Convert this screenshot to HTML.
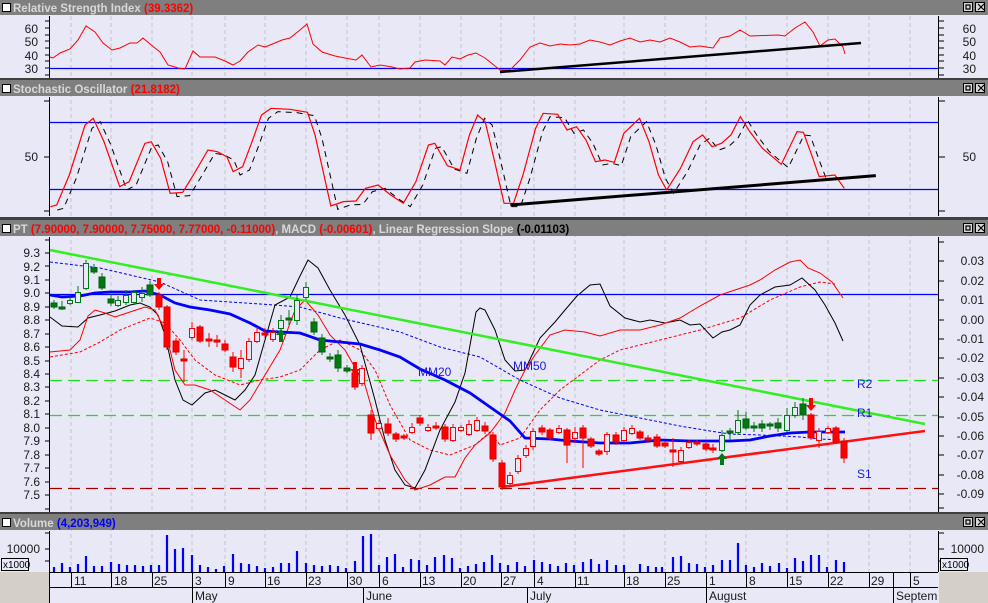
<!DOCTYPE html>
<html><head><meta charset="utf-8"><style>
body{margin:0;background:#e8e8f6;}
svg{display:block;}
text{font-family:"Liberation Sans",sans-serif;}
.ax{font-size:12px;fill:#1a1a1a;}
.tt{font-size:11.5px;font-weight:bold;fill:#d8d8d8;}
.gf{fill:#007a10;stroke:#006010;}
.gh{fill:#e8e8f6;stroke:#007a10;}
.rf{fill:#ff0000;stroke:#e00000;}
.rh{fill:#e8e8f6;stroke:#ff0000;}
</style></head><body>
<svg width="988" height="603" viewBox="0 0 988 603" xmlns="http://www.w3.org/2000/svg">
<rect width="988" height="603" fill="#e8e8f6"/>
<g stroke="#c4c4cc" stroke-dasharray="4,3" stroke-width="1">
<path d="M71 16V572M111 16V572M152 16V572M192 16V572M225 16V572M265 16V572M306 16V572M347 16V572M379 16V572M420 16V572M461 16V572M501 16V572M534 16V572M575 16V572M624 16V572M665 16V572M706 16V572M746 16V572M787 16V572M828 16V572M869 16V572M910 16V572"/>
</g>

<g>
<rect x="0" y="0" width="988" height="15" fill="#7f7f7f"/>
<rect x="0" y="80" width="988" height="16" fill="#7f7f7f"/>
<rect x="0" y="220" width="988" height="16" fill="#7f7f7f"/>
<rect x="0" y="514" width="988" height="16" fill="#7f7f7f"/>
<g fill="#404040"><rect x="0" y="78" width="988" height="2"/><rect x="0" y="217" width="988" height="3"/><rect x="0" y="512" width="988" height="2"/></g>
<g fill="#fff" stroke="#000" stroke-width="1">
<rect x="2.5" y="3.5" width="8" height="8"/><rect x="2.5" y="84.5" width="8" height="8"/><rect x="2.5" y="224.5" width="8" height="8"/><rect x="2.5" y="518.5" width="8" height="8"/>
</g>
<g fill="#d8d8d8" stroke="#000" stroke-width="1">
<rect x="963.5" y="2.5" width="9" height="9"/><rect x="975.5" y="2.5" width="9" height="9"/>
<rect x="963.5" y="83.5" width="9" height="9"/><rect x="975.5" y="83.5" width="9" height="9"/>
<rect x="963.5" y="223.5" width="9" height="9"/><rect x="975.5" y="223.5" width="9" height="9"/>
<rect x="963.5" y="517.5" width="9" height="9"/><rect x="975.5" y="517.5" width="9" height="9"/>
</g>
<g stroke="#000" stroke-width="1.2"><path d="M966 5h4v4h-4zM978 4l6 6M984 4l-6 6M966 86h4v4h-4zM978 85l6 6M984 85l-6 6M966 226h4v4h-4zM978 225l6 6M984 225l-6 6M966 520h4v4h-4zM978 519l6 6M984 519l-6 6" fill="none"/></g>
<text class="tt" x="13" y="12">Relative Strength Index <tspan fill="#ff0000">(39.3362)</tspan></text>
<text class="tt" x="13" y="93">Stochastic Oscillator <tspan fill="#ff0000">(21.8182)</tspan></text>
<text class="tt" x="13" y="233">PT <tspan fill="#ff0000">(7.90000, 7.90000, 7.75000, 7.77000, -0.11000)</tspan>, MACD <tspan fill="#ff0000">(-0.00601)</tspan>, Linear Regression Slope <tspan fill="#000">(-0.01103)</tspan></text>
<text class="tt" x="13" y="527">Volume <tspan fill="#0000ff">(4,203,949)</tspan></text>
</g>

<g stroke="#000" stroke-width="1">
<path d="M49.5 16V78M938.5 16V78M49.5 97V216M938.5 97V216M49.5 237V512M938.5 237V512M49.5 531V603M938.5 531V572"/>
<path d="M45 21h5M45 28h5M45 35h5M45 41h5M45 48h5M45 55h5M45 61h5M45 68h5M45 75h5M939 21h5M939 28h5M939 35h5M939 41h5M939 48h5M939 55h5M939 61h5M939 68h5M939 75h5"/>
<path d="M44 101h6M44 211h6M44 157h6M939 101h6M939 211h6M939 157h6"/>
<path d="M45 253h5M45 266h5M45 280h5M45 293h5M45 307h5M45 320h5M45 334h5M45 347h5M45 361h5M45 374h5M45 387h5M45 401h5M45 414h5M45 428h5M45 441h5M45 455h5M45 468h5M45 482h5M45 495h5M45 509h5M45 240h5"/>
<path d="M939 242h5M939 261h5M939 281h5M939 300h5M939 320h5M939 339h5M939 358h5M939 378h5M939 397h5M939 417h5M939 436h5M939 455h5M939 475h5M939 494h5M939 508h5"/>
<path d="M45 533h5M45 549h5M45 561h5M939 533h5M939 549h5M939 561h5"/>
</g>
<g class="ax" text-anchor="end">
<text x="38" y="33">60</text><text x="38" y="46">50</text><text x="38" y="60">40</text><text x="38" y="73">30</text>
<text x="38" y="161">50</text>
<text x="40" y="257">9.3</text><text x="40" y="271">9.2</text><text x="40" y="284">9.1</text><text x="40" y="297">9.0</text><text x="40" y="311">8.9</text><text x="40" y="324">8.8</text><text x="40" y="338">8.7</text><text x="40" y="351">8.6</text><text x="40" y="365">8.5</text><text x="40" y="378">8.4</text><text x="40" y="391">8.3</text><text x="40" y="405">8.2</text><text x="40" y="418">8.1</text><text x="40" y="432">8.0</text><text x="40" y="445">7.9</text><text x="40" y="459">7.8</text><text x="40" y="472">7.7</text><text x="40" y="486">7.6</text><text x="40" y="499">7.5</text>
<text x="40" y="553">10000</text>
</g>
<g class="ax" text-anchor="end">
<text x="976" y="33">60</text><text x="976" y="46">50</text><text x="976" y="60">40</text><text x="976" y="73">30</text>
<text x="976" y="161">50</text>
<text x="984" y="265">0.03</text><text x="984" y="285">0.02</text><text x="984" y="304">0.01</text><text x="984" y="324">0.00</text><text x="984" y="343">-0.01</text><text x="984" y="362">-0.02</text><text x="984" y="382">-0.03</text><text x="984" y="401">-0.04</text><text x="984" y="421">-0.05</text><text x="984" y="440">-0.06</text><text x="984" y="459">-0.07</text><text x="984" y="479">-0.08</text><text x="984" y="498">-0.09</text>
<text x="984" y="553">10000</text>
</g>
<g font-size="10" fill="#000"><rect x="1.5" y="558.5" width="27" height="12" fill="#e8e8f6" stroke="#000"/><text x="3" y="568">x1000</text>
<rect x="940.5" y="558.5" width="27" height="12" fill="#e8e8f6" stroke="#000"/><text x="942" y="568">x1000</text></g>

<path d="M50 68.5H938" stroke="#0000ff" stroke-width="1.2"/>
<polyline fill="none" stroke="#ff0000" stroke-width="1" points="50,57 53,58 60,53 70,49 78,40 86,26 95,32 103,43 112,50 120,48 130,43 137,43 143,38 150,44 160,52 168,65 178,68 185,69 193,51 200,57 215,57 225,61 233,65 240,61 248,52 258,45 265,47 275,43 282,40 290,38 300,30 307,24 313,44 322,52 335,56 345,58 356,60 362,55 371,67 380,65 392,67 400,69 410,68 415,62 425,60 440,61 445,65 452,57 460,59 468,55 476,53 485,58 495,66 500,70 510,70 520,60 530,47 540,43 550,46 560,44 570,45 580,44 590,40 600,42 610,45 620,41 630,38 640,42 650,40 660,42 670,38 680,42 690,47 700,46 713,48 720,38 730,36 740,30 750,36 778,35 785,36 795,28 805,22 813,32 820,46 828,40 835,39 843,47 845,54"/>
<path d="M500 72L861 43" stroke="#000" stroke-width="2.5"/>

<path d="M50 122.5H938M50 189.5H938" stroke="#0000ff" stroke-width="1.2"/>
<g transform="translate(0,75) scale(0.6301,0.3333)">
<polyline fill="none" stroke="#000" stroke-dasharray="6,5" vector-effect="non-scaling-stroke" stroke-width="1" transform="translate(11,10)" points="80,395 90,390 110,300 135,150 148,130 165,200 190,335 205,320 230,205 240,200 255,250 270,355 290,352 310,290 330,225 345,230 360,245 370,290 385,275 400,200 415,120 430,100 460,103 488,112 500,180 525,393 545,380 565,378 580,340 600,330 620,360 640,385 660,320 680,210 690,205 710,272 730,285 745,180 758,120 770,140 785,260 800,385 815,385 830,300 850,160 862,115 885,118 900,165 915,155 930,195 945,260 960,255 975,262 990,175 1015,130 1030,200 1045,300 1058,345 1080,280 1100,200 1115,180 1130,215 1145,205 1160,180 1175,125 1190,170 1210,220 1240,268 1265,170 1275,172 1290,250 1300,300 1325,300"/>
<polyline fill="none" stroke="#ff0000" vector-effect="non-scaling-stroke" stroke-width="1.2" points="80,395 90,390 110,300 135,150 148,130 165,200 190,335 205,320 230,205 240,200 255,250 270,355 290,352 310,290 330,225 345,230 360,245 370,290 385,275 400,200 415,120 430,100 460,103 488,112 500,180 525,393 545,380 565,378 580,340 600,330 620,360 640,385 660,320 680,210 690,205 710,272 730,285 745,180 758,120 770,140 785,260 800,385 815,385 830,300 850,160 862,115 885,118 900,165 915,155 930,195 945,260 960,255 975,262 990,175 1015,130 1030,200 1045,300 1058,345 1080,280 1100,200 1115,180 1130,215 1145,205 1160,180 1175,125 1190,170 1210,220 1240,268 1265,170 1275,172 1290,250 1300,305 1325,300 1340,340"/>
<path d="M810 390L1390 302" stroke="#000" stroke-width="3" vector-effect="non-scaling-stroke"/>
</g>

<path d="M50 294.5H938" stroke="#0000ff" stroke-width="1.2"/>
<g stroke-dasharray="12,6" stroke-width="1.2">
<path d="M50 380.5H938M50 415.5H938" stroke="#22dd22"/>
<path d="M50 488.5H938" stroke="#a00000"/>
</g>
<polyline fill="none" stroke="#0000ff" stroke-dasharray="3,2" stroke-width="1" points="50,262 100,268 160,282 200,300 260,304 300,307 340,318 400,332 440,347 480,357 520,380 560,398 600,410 640,418 680,426 710,431 730,434 760,435 800,437 820,439 840,440"/>
<polyline fill="none" stroke="#ff0000" stroke-dasharray="3,2" stroke-width="1" points="50,357 80,352 100,342 120,330 150,318 165,323 180,340 195,360 215,375 240,385 260,380 280,377 300,370 320,350 340,340 360,350 375,370 390,405 410,440 430,450 450,455 475,445 490,432 500,445 520,438 540,410 560,390 580,375 600,360 620,350 660,340 700,330 740,318 770,300 800,287 820,282 835,284"/>
<polyline fill="none" stroke="#000" stroke-width="1" points="50,317 62,326 78,327 88,318 100,315 115,311 130,305 140,303 150,307 158,315 165,335 175,380 183,400 192,405 205,393 215,390 225,395 235,400 245,390 255,375 265,340 275,305 290,297 300,276 308,260 318,268 330,290 345,315 360,345 375,400 385,440 395,470 405,485 415,488 425,470 440,430 455,402 465,373 476,312 480,308 485,310 495,330 505,360 515,371 525,370 540,338 555,322 565,310 577,296 590,285 600,284 610,306 625,318 640,322 650,320 665,323 680,320 690,325 700,324 713,338 722,332 730,330 740,325 750,305 760,295 775,287 790,285 802,278 815,290 825,305 835,323 843,341"/>
<polyline fill="none" stroke="#ff0000" stroke-width="1" points="50,352 70,350 80,340 88,316 95,310 105,313 115,317 130,312 145,307 155,310 165,330 175,370 185,385 195,385 210,390 225,400 240,410 250,400 265,375 280,350 295,310 305,300 318,315 330,335 345,350 365,385 375,420 390,455 405,480 415,490 430,485 445,477 455,477 465,458 475,445 490,433 505,413 515,390 525,370 535,355 550,335 565,330 585,332 600,336 620,330 640,330 660,325 680,318 700,306 720,295 735,290 750,285 760,280 775,270 790,262 800,260 808,268 820,273 832,282 843,298"/>
<path d="M50 250L925 424" stroke="#33ee22" stroke-width="2.5"/>
<path d="M502 487L925 431" stroke="#ff1010" stroke-width="2.5"/>
<polyline fill="none" stroke="#0000ff" stroke-width="2.8" points="50,295 62,297 80,296 95,293 110,292 130,292 145,291 160,295 175,303 190,307 210,310 230,314 250,323 265,331 280,332 300,333 320,340 340,342 360,344 380,350 400,357 420,369 445,380 470,393 490,407 510,421 525,438 550,439 570,441 600,443 630,443 660,440 690,441 730,441 750,440 770,436 790,433 810,432 845,432"/>
<g font-size="12" fill="#1a1ae0">
<text x="418" y="376">MM20</text><text x="513" y="370">MM50</text><text x="857" y="388">R2</text><text x="857" y="417">R1</text><text x="857" y="478">S1</text>
</g>
<path fill="none" stroke="#007a10" stroke-width="1" d="M54 300V309M62 301V310M70 297V305M78 286V303M86 260V290M94 264V274M102 273V290M111 294V306M118 296V307M126 290V305M134 290V305M142 287V302M150 281V297M281 315V333M289 310V325M297 295V325M306 282V300M314 318V335M322 334V355M330 353V362M338 350V372M347 365V373M722 430V452M730 428V440M738 410V435M746 412V430M754 422V432M762 420V432M770 422V430M778 418V432M787 408V432M795 402V418M803 398V420"/>
<path fill="none" stroke="#ff0000" stroke-width="1" d="M159 292V310M167 305V350M176 338V355M184 350V382M192 322V340M200 325V343M209 333V347M217 335V347M225 340V352M233 352V372M241 350V378M249 338V362M257 327V343M265 328V338M273 328V342M355 370V390M362 365V386M371 410V440M379 420V431M388 418V436M396 432V442M404 434V440M412 423V434M420 415V426M428 424V432M436 422V430M445 424V442M453 424V442M461 425V432M469 420V436M477 417V432M485 422V434M493 432V462M502 460V490M510 472V486M518 455V474M526 445V458M533 428V450M542 425V435M550 428V440M559 425V434M567 428V463M575 427V443M583 425V468M591 437V448M599 449V456M607 432V455M616 432V445M624 427V442M632 425V435M640 430V440M648 435V443M657 434V448M665 441V448M673 438V467M681 447V463M689 440V449M697 440V446M706 441V451M713 444V453M811 413V440M819 428V448M828 426V434M836 426V444M844 438V463"/>
<g stroke-width="1">
<rect class="gf" x="51" y="303" width="6" height="4"/><rect class="gf" x="59" y="307" width="6" height="2"/><rect class="gh" x="67.5" y="300.5" width="5" height="3"/><rect class="gh" x="75.5" y="292.5" width="5" height="10"/><rect class="gh" x="83.5" y="263.5" width="5" height="25"/><rect class="gf" x="91" y="268" width="6" height="4"/><rect class="gf" x="99" y="277" width="6" height="11"/><rect class="gf" x="108" y="299" width="6" height="4"/><rect class="gh" x="115.5" y="300.5" width="5" height="5"/><rect class="gh" x="123.5" y="295.5" width="5" height="7"/><rect class="gh" x="131.5" y="292.5" width="5" height="10"/><rect class="gh" x="139.5" y="293.5" width="5" height="4"/><rect class="gf" x="147" y="285" width="6" height="10"/>
<rect class="rf" x="156" y="295" width="6" height="12"/><rect class="rf" x="164" y="307" width="6" height="40"/><rect class="rf" x="173" y="341" width="6" height="11"/><rect class="rf" x="181" y="359" width="6" height="2"/><rect class="rh" x="189.5" y="328.5" width="5" height="9"/><rect class="rf" x="197" y="327" width="6" height="14"/><rect class="rf" x="206" y="339" width="6" height="2"/><rect class="rf" x="214" y="340" width="6" height="2"/><rect class="rf" x="222" y="344" width="6" height="6"/><rect class="rf" x="230" y="357" width="6" height="10"/><rect class="rh" x="238.5" y="358.5" width="5" height="10"/><rect class="rh" x="246.5" y="341.5" width="5" height="18"/><rect class="rh" x="254.5" y="332.5" width="5" height="9"/><rect class="rf" x="262" y="333" width="6" height="2"/><rect class="rh" x="270.5" y="332.5" width="5" height="7"/>
<rect class="gh" x="278.5" y="320.5" width="5" height="8"/><rect class="gf" x="286" y="318" width="6" height="2"/><rect class="gh" x="294.5" y="300.5" width="5" height="20"/><rect class="gh" x="303.5" y="287.5" width="5" height="10"/><rect class="gf" x="311" y="322" width="6" height="10"/><rect class="gf" x="319" y="338" width="6" height="14"/><rect class="gf" x="327" y="357" width="6" height="2"/><rect class="gf" x="335" y="355" width="6" height="13"/><rect class="gf" x="344" y="368" width="6" height="3"/>
<rect class="rf" x="352" y="373" width="6" height="14"/><rect class="rh" x="359.5" y="368.5" width="5" height="15"/><rect class="rf" x="368" y="415" width="6" height="18"/><rect class="rh" x="376.5" y="423.5" width="5" height="5"/><rect class="rf" x="385" y="424" width="6" height="9"/><rect class="rf" x="393" y="434" width="6" height="5"/><rect class="rf" x="401" y="436" width="6" height="2"/><rect class="rh" x="409.5" y="427.5" width="5" height="5"/><rect class="rf" x="417" y="418" width="6" height="5"/><rect class="rh" x="425.5" y="427.5" width="5" height="3"/><rect class="rf" x="433" y="426" width="6" height="2"/><rect class="rf" x="442" y="427" width="6" height="12"/><rect class="rh" x="450.5" y="427.5" width="5" height="13"/><rect class="rh" x="458.5" y="427.5" width="5" height="3"/><rect class="rh" x="466.5" y="424.5" width="5" height="10"/><rect class="rh" x="474.5" y="420.5" width="5" height="10"/><rect class="rf" x="482" y="426" width="6" height="5"/><rect class="rf" x="490" y="435" width="6" height="24"/><rect class="rf" x="499" y="463" width="6" height="24"/><rect class="rh" x="507.5" y="475.5" width="5" height="8"/><rect class="rh" x="515.5" y="458.5" width="5" height="13"/><rect class="rh" x="523.5" y="448.5" width="5" height="7"/><rect class="rh" x="530.5" y="431.5" width="5" height="15"/><rect class="rf" x="539" y="428" width="6" height="4"/><rect class="rf" x="547" y="430" width="6" height="8"/><rect class="rh" x="556.5" y="428.5" width="5" height="4"/><rect class="rf" x="564" y="430" width="6" height="15"/><rect class="rh" x="572.5" y="432.5" width="5" height="6"/><rect class="rf" x="580" y="428" width="6" height="10"/><rect class="rf" x="588" y="439" width="6" height="7"/><rect class="rf" x="596" y="451" width="6" height="3"/><rect class="rh" x="604.5" y="434.5" width="5" height="17"/><rect class="rf" x="613" y="435" width="6" height="7"/><rect class="rh" x="621.5" y="430.5" width="5" height="10"/><rect class="rh" x="629.5" y="428.5" width="5" height="5"/><rect class="rf" x="637" y="432" width="6" height="6"/><rect class="rf" x="645" y="438" width="6" height="2"/><rect class="rf" x="654" y="437" width="6" height="9"/><rect class="rf" x="662" y="443" width="6" height="3"/><rect class="rf" x="670" y="450" width="6" height="2"/><rect class="rh" x="678.5" y="450.5" width="5" height="11"/><rect class="rh" x="686.5" y="442.5" width="5" height="5"/><rect class="rf" x="694" y="442" width="6" height="2"/><rect class="rf" x="703" y="444" width="6" height="5"/><rect class="rf" x="710" y="448" width="6" height="2"/>
<rect class="gh" x="719.5" y="435.5" width="5" height="15"/><rect class="gf" x="727" y="431" width="6" height="2"/><rect class="gh" x="735.5" y="420.5" width="5" height="12"/><rect class="gf" x="743" y="419" width="6" height="9"/><rect class="gf" x="751" y="426" width="6" height="2"/><rect class="gf" x="759" y="424" width="6" height="4"/><rect class="gf" x="767" y="424" width="6" height="2"/><rect class="gf" x="775" y="423" width="6" height="5"/><rect class="gh" x="784.5" y="415.5" width="5" height="15"/><rect class="gh" x="792.5" y="407.5" width="5" height="8"/><rect class="gf" x="800" y="404" width="6" height="11"/>
<rect class="rf" x="808" y="415" width="6" height="23"/><rect class="rh" x="816.5" y="431.5" width="5" height="9"/><rect class="rh" x="825.5" y="428.5" width="5" height="4"/><rect class="rf" x="833" y="428" width="6" height="14"/><rect class="rf" x="841" y="441" width="6" height="17"/>
</g>
<g fill="#ff0000"><path d="M157 278h4v6h3l-5 6l-5-6h3z"/><path d="M353 362h4v7h3l-5 6l-5-6h3z"/><path d="M809 398h4v7h3l-5 6l-5-6h3z"/></g>
<g fill="#007a10"><path d="M279 342h4v-7h3l-5-6l-5 6h3z"/><path d="M720 465h4v-6h3l-5-6l-5 6h3z"/></g>

<path fill="none" stroke="#0000ff" stroke-width="2.2" d="M54 572V567M62 572V563M70 572V567M78 572V564M86 572V556M94 572V566M102 572V566M111 572V562M119 572V564M127 572V565M135 572V565M143 572V566M151 572V565M159 572V565M167 572V535M175 572V549M183 572V548M192 572V555M200 572V565M208 572V567M216 572V569M224 572V566M233 572V554M241 572V563M249 572V564M257 572V566M265 572V568M273 572V567M281 572V563M289 572V563M297 572V551M306 572V563M314 572V565M322 572V566M330 572V565M338 572V566M346 572V568M355 572V561M363 572V536M371 572V534M379 572V565M387 572V557M395 572V554M403 572V567M411 572V559M419 572V560M427 572V565M435 572V557M444 572V555M452 572V558M460 572V568M468 572V566M476 572V564M484 572V562M492 572V555M500 572V563M508 572V565M517 572V562M525 572V566M534 572V560M542 572V562M550 572V564M558 572V566M566 572V563M574 572V565M583 572V562M591 572V559M599 572V564M607 572V560M616 572V565M624 572V565M640 572V564M648 572V566M656 572V567M662 572V567M673 572V557M681 572V556M689 572V563M697 572V564M705 572V567M713 572V565M722 572V560M730 572V560M738 572V543M746 572V565M754 572V567M762 572V563M770 572V566M779 572V563M787 572V568M795 572V558M803 572V561M811 572V555M819 572V555M827 572V567M836 572V560M844 572V562"/>

<rect x="0" y="572" width="49" height="31" fill="#d4d0c8"/>
<rect x="939" y="572" width="49" height="31" fill="#d4d0c8"/>
<path d="M49 572.5H938M49 587.5H938" stroke="#000"/>
<path d="M71.5 572V587M111.5 572V587M152.5 572V587M192.5 572V603M225.5 572V587M265.5 572V587M306.5 572V587M347.5 572V587M379.5 572V587M420.5 572V587M461.5 572V587M501.5 572V587M534.5 572V587M575.5 572V587M624.5 572V587M665.5 572V587M706.5 572V603M746.5 572V587M787.5 572V587M828.5 572V587M869.5 572V587M893.5 572V603M910.5 572V587M363.5 587V603M527.5 587V603" stroke="#000"/>
<g class="ax">
<text x="74" y="585">11</text><text x="114" y="585">18</text><text x="154" y="585">25</text><text x="195" y="585">3</text><text x="228" y="585">9</text><text x="267" y="585">16</text><text x="308" y="585">23</text><text x="349" y="585">30</text><text x="382" y="585">6</text><text x="422" y="585">13</text><text x="463" y="585">20</text><text x="503" y="585">27</text><text x="537" y="585">4</text><text x="577" y="585">11</text><text x="626" y="585">18</text><text x="667" y="585">25</text><text x="709" y="585">1</text><text x="749" y="585">8</text><text x="789" y="585">15</text><text x="830" y="585">22</text><text x="871" y="585">29</text><text x="913" y="585">5</text>
<text x="195" y="600">May</text><text x="366" y="600">June</text><text x="530" y="600">July</text><text x="709" y="600">August</text><text x="896" y="600">Septem</text>
</g>
</svg>
</body></html>
